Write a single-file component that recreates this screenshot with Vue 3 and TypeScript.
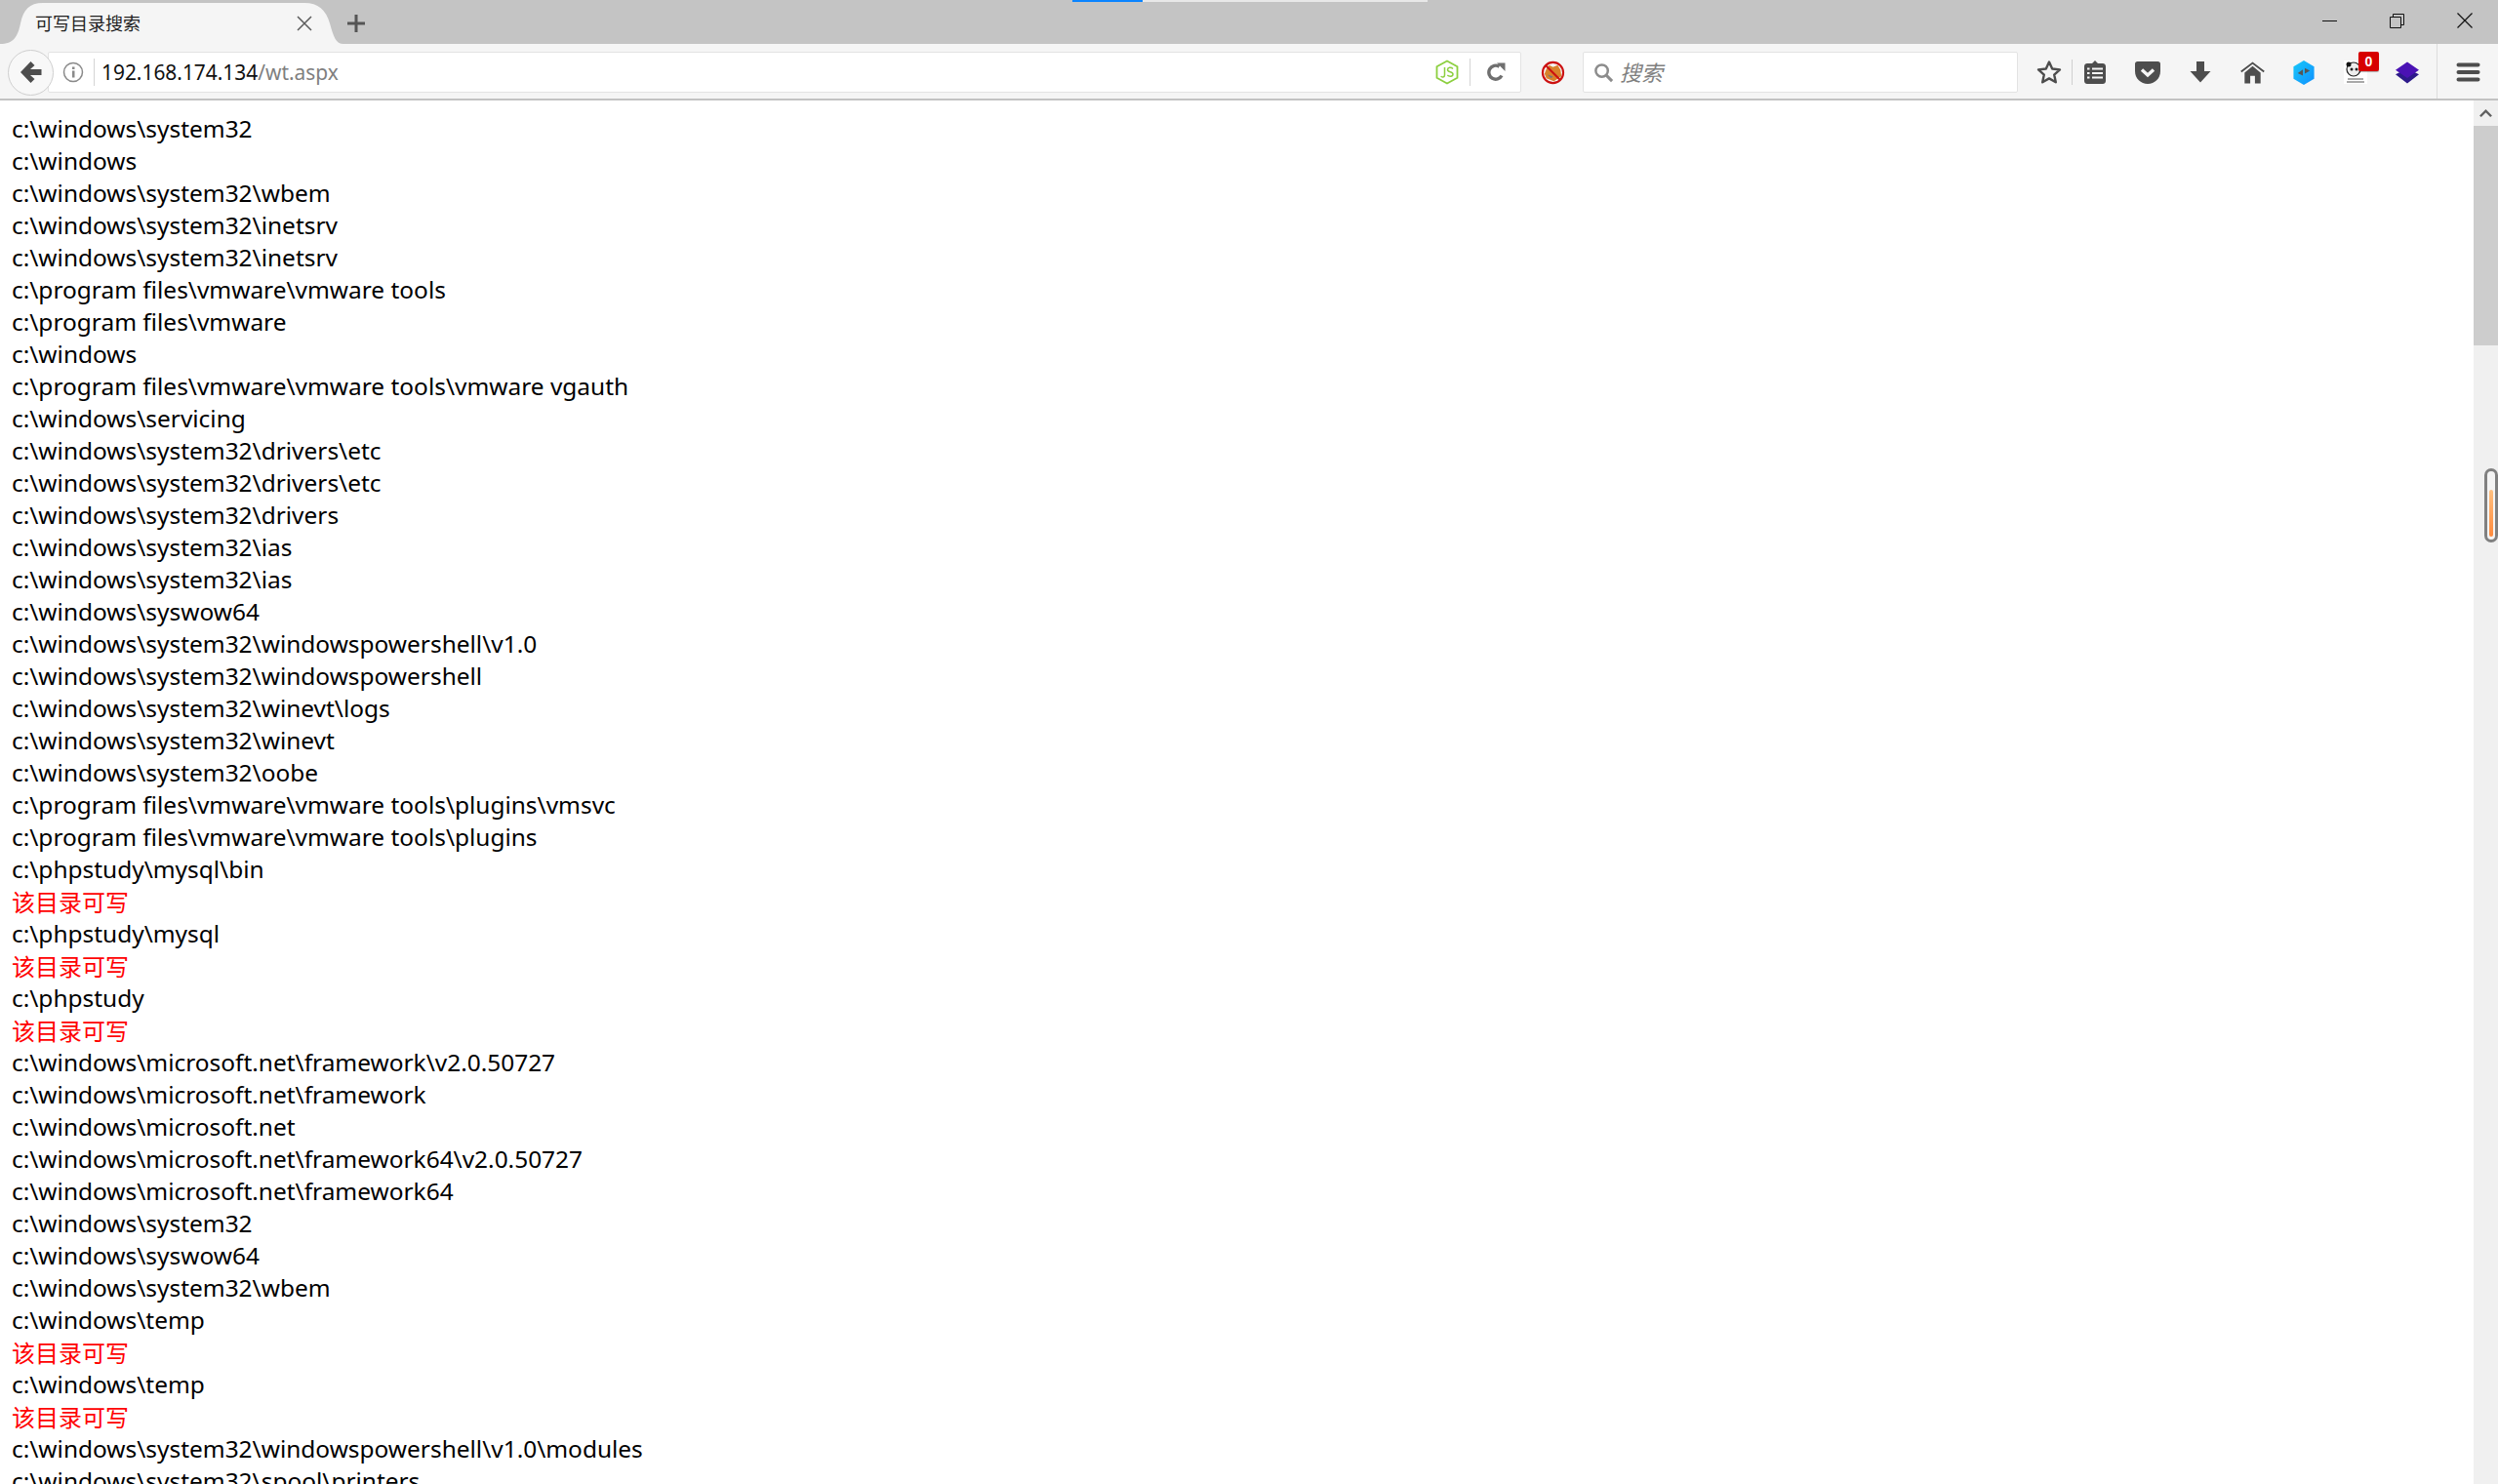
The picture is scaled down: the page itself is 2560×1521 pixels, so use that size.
<script setup lang="ts">
const W = '该目录可写'
const lines: string[] = [
  'c:\\windows\\system32','c:\\windows','c:\\windows\\system32\\wbem','c:\\windows\\system32\\inetsrv','c:\\windows\\system32\\inetsrv',
  'c:\\program files\\vmware\\vmware tools','c:\\program files\\vmware','c:\\windows','c:\\program files\\vmware\\vmware tools\\vmware vgauth',
  'c:\\windows\\servicing','c:\\windows\\system32\\drivers\\etc','c:\\windows\\system32\\drivers\\etc','c:\\windows\\system32\\drivers',
  'c:\\windows\\system32\\ias','c:\\windows\\system32\\ias','c:\\windows\\syswow64','c:\\windows\\system32\\windowspowershell\\v1.0',
  'c:\\windows\\system32\\windowspowershell','c:\\windows\\system32\\winevt\\logs','c:\\windows\\system32\\winevt','c:\\windows\\system32\\oobe',
  'c:\\program files\\vmware\\vmware tools\\plugins\\vmsvc','c:\\program files\\vmware\\vmware tools\\plugins','c:\\phpstudy\\mysql\\bin',W,
  'c:\\phpstudy\\mysql',W,'c:\\phpstudy',W,'c:\\windows\\microsoft.net\\framework\\v2.0.50727','c:\\windows\\microsoft.net\\framework',
  'c:\\windows\\microsoft.net','c:\\windows\\microsoft.net\\framework64\\v2.0.50727','c:\\windows\\microsoft.net\\framework64',
  'c:\\windows\\system32','c:\\windows\\syswow64','c:\\windows\\system32\\wbem','c:\\windows\\temp',W,'c:\\windows\\temp',W,
  'c:\\windows\\system32\\windowspowershell\\v1.0\\modules','c:\\windows\\system32\\spool\\printers'
]
</script>

<template>
  <div class="browser">
    <header class="tabstrip">
      <div class="tab">
        <svg class="tab-shape" width="352" height="45" viewBox="0 0 352 45"><path d="M0 45C14 45 18 38 21 24C24 10 30 3 44 3H312C326 3 334 10 338 24C342 38 344 45 352 45Z" fill="#f5f5f5"/></svg>
        <span class="tab-title">可写目录搜索</span>
        <svg class="tab-close" width="16" height="16" viewBox="0 0 16 16"><path d="M1 1L15 15M15 1L1 15" stroke="#5c5c5c" stroke-width="1.5" fill="none"/></svg>
      </div>
      <svg class="newtab" width="18" height="18" viewBox="0 0 18 18"><path d="M9 0V18M0 9H18" stroke="#555" stroke-width="3" fill="none"/></svg>
      <div class="progress"><i class="p-blue"></i><i class="p-light"></i></div>
      <div class="winctl">
        <svg width="16" height="16" viewBox="0 0 16 16"><path d="M0 8.500H15" stroke="#111" fill="none"/></svg>
        <svg width="16" height="16" viewBox="0 0 16 16"><path d="M.5 4.500H11.500V15.500H.5ZM3.500 4.500V1.500H14.500V12.500H11.500" stroke="#111" fill="none"/></svg>
        <svg width="16" height="16" viewBox="0 0 16 16"><path d="M.5.5L15.500 15.500M15.500.5L.5 15.500" stroke="#111" stroke-width="1.200" fill="none"/></svg>
      </div>
    </header>

    <nav class="toolbar">
      <div class="back">
        <svg width="24" height="24" viewBox="0 0 24 24"><path d="M1 12L11.500 1L15.500 5L11 9H22.500V15H11L15.500 19L11.500 23Z" fill="#4d4d4d"/></svg>
      </div>
      <div class="urlbar">
        <svg class="info" width="22" height="22" viewBox="0 0 22 22"><circle cx="11" cy="11" r="9.500" fill="none" stroke="#8a8a8a" stroke-width="1.500"/><rect x="10" y="9.500" width="2.500" height="7" fill="#8a8a8a"/><rect x="10" y="5.500" width="2.500" height="2.500" fill="#8a8a8a"/></svg>
        <span class="sep"></span>
        <span class="url">192.168.174.134<span class="path">/wt.aspx</span></span>
        <svg class="node" width="24" height="26" viewBox="0 0 24 26"><path d="M12 1.500L22.500 7.200V18.800L12 24.500L1.500 18.800V7.200Z" fill="none" stroke="#8ccf3f" stroke-width="1.800"/><path d="M9.500 8V16C9.500 18.500 6.500 18.500 5.800 17M18 9.500C16 7.500 12.500 8 12.500 10.500C12.500 13.500 18 12 18 15C18 17.800 14 17.800 12.300 16" fill="none" stroke="#8ccf3f" stroke-width="1.500"/></svg>
        <span class="sep sep2"></span>
        <svg class="reload" width="20" height="20" viewBox="0 0 20 20"><path d="M16 13.500A7 7 0 1 1 13.500 4.200" fill="none" stroke="#6f6f6f" stroke-width="3.400"/><path d="M11 .5H19.500V9Z" fill="#6f6f6f"/></svg>
      </div>
      <svg class="block" width="25" height="25" viewBox="0 0 26 26"><path d="M6 9L9 5L13 7L18 5L21 10L22 17L14 22L6 19L4 14Z" fill="#d9822b"/><path d="M7 15L13 17L11 19Z" fill="#777"/><circle cx="13" cy="13" r="11" fill="none" stroke="#cc1111" stroke-width="2.200"/><path d="M5.500 5.500L20.500 20.500" stroke="#cc1111" stroke-width="2.200"/></svg>
      <div class="search">
        <svg width="21" height="21" viewBox="0 0 22 22"><circle cx="9" cy="9" r="6.500" fill="none" stroke="#8c8c8c" stroke-width="2.600"/><path d="M13.500 13.500L20 20" stroke="#8c8c8c" stroke-width="3.200"/></svg>
        <span class="search-text">搜索</span>
      </div>
      <div class="tools">
        <svg class="t-star" width="26" height="26" viewBox="0 0 26 26"><path d="M13 2.500L16.200 9.500L24 10.400L18.200 15.600L19.800 23.300L13 19.400L6.200 23.300L7.800 15.600L2 10.400L9.800 9.500Z" fill="none" stroke="#4d4d4d" stroke-width="2.400" stroke-linejoin="round"/></svg>
        <span class="t-sep"></span>
        <svg class="t-list" width="22" height="24" viewBox="0 0 22 24"><path d="M3 3H8L11 0L14 3H19C20.500 3 22 4 22 6V21C22 23 20.500 24 19 24H3C1.500 24 0 23 0 21V6C0 4 1.500 3 3 3Z" fill="#4d4d4d"/><path d="M3 8.500H5.500M8 8.500H19M3 13H5.500M8 13H19M3 17.500H5.500M8 17.500H19" stroke="#f5f5f5" stroke-width="2"/></svg>
        <svg class="t-pocket" width="26" height="23" viewBox="0 0 26 23"><path d="M2.500 0H23.500C25 0 26 1 26 2.500V10C26 17.500 20 23 13 23C6 23 0 17.500 0 10V2.500C0 1 1 0 2.500 0Z" fill="#4d4d4d"/><path d="M7 8.500L13 14L19 8.500" fill="none" stroke="#f5f5f5" stroke-width="3.400"/></svg>
        <svg class="t-dl" width="22" height="22" viewBox="0 0 22 22"><path d="M7 0H15V10H21.500L11 21.500L.5 10H7Z" fill="#4d4d4d"/></svg>
        <svg class="t-home" width="25" height="23" viewBox="0 0 26 23"><path d="M4.500 11.500L13 4.500L21.500 11.500V23H15.500V15H10.500V23H4.500Z" fill="#4d4d4d"/><path d="M.8 10.500L13 1.200L25.200 10.500" fill="none" stroke="#4d4d4d" stroke-width="2"/></svg>
        <svg class="t-hex" width="22" height="25" viewBox="0 0 22 26"><defs><linearGradient id="hexg" x1="0" y1="0" x2="1" y2="1"><stop offset="0" stop-color="#18c8f8"/><stop offset="1" stop-color="#1090ff"/></linearGradient></defs><path d="M11 0L22 6.500V19.500L11 26L0 19.500V6.500Z" fill="url(#hexg)"/><path d="M10 9.500V16L4.500 13.500ZM12 8V14L17.500 11Z" fill="#555"/></svg>
        <div class="t-panda">
          <svg width="24" height="24" viewBox="0 0 24 24"><rect width="24" height="24" fill="#fff"/><circle cx="10" cy="9" r="7" fill="#eee" stroke="#222" stroke-width="1.200"/><circle cx="5" cy="4" r="2.500" fill="#111"/><circle cx="8" cy="9" r="1.500" fill="#222"/><circle cx="13" cy="9" r="1.500" fill="#222"/><path d="M4 19H20M3 22H21" stroke="#555" stroke-width="1.200"/></svg>
          <b class="badge">0</b>
        </div>
        <svg class="t-layers" width="24" height="23" viewBox="0 0 26 24"><path d="M0 14L6 11L13 15L20 11L26 14L13 24Z" fill="#2d1a8a"/><path d="M13 0L26 9L13 18L0 9Z" fill="#4a12b4"/></svg>
        <span class="t-sep t-sep2"></span>
        <svg class="t-menu" width="25" height="20" viewBox="0 0 24 20"><path d="M2 2.500H22M2 10H22M2 17.500H22" stroke="#4d4d4d" stroke-width="4" stroke-linecap="round" fill="none"/></svg>
      </div>
    </nav>

    <main class="page">
      <section class="content">
        <div v-for="(line, i) in lines" :key="i" :class="{ writable: line === W }">{{ line }}</div>
      </section>
      <aside class="scrollbar">
        <div class="sb-up"><svg width="13" height="10" viewBox="0 0 14 10"><path d="M1 8.500L7 2.500L13 8.500" fill="none" stroke="#606060" stroke-width="2.600"/></svg></div>
        <div class="sb-thumb"></div>
        <div class="marker"><i></i></div>
      </aside>
    </main>
  </div>
</template>

<style>
html, body { margin: 0; height: 100%; overflow: hidden; background: #fff; }
</style>

<style scoped>
.browser { width: 2560px; height: 1521px; display: flex; flex-direction: column; overflow: hidden; font-family: "Noto Sans", "Noto Sans CJK SC", sans-serif; }
.tabstrip { height: 45px; flex: none; background: #c4c4c4; position: relative; display: flex; align-items: center; }
.tab { width: 352px; height: 45px; position: relative; display: flex; align-items: center; flex: none; }
.tab-shape { position: absolute; left: 0; top: 0; }
.tab-title { position: relative; margin-left: 36px; font: 18px "Noto Sans CJK SC", sans-serif; color: #222; }
.tab-close { position: absolute; left: 304px; top: 16px; }
.newtab { margin: 3px 0 0 4px; }
.progress { position: absolute; left: 1099px; top: 0; height: 2px; display: flex; }
.p-blue { width: 72px; background: #0a84ff; }
.p-light { width: 292px; background: #e8e8e8; }
.winctl { margin-left: auto; display: flex; gap: 53px; padding-right: 26px; align-items: center; margin-top: -3px; }
.toolbar { height: 58px; flex: none; box-sizing: border-box; background: #f5f5f5; border-bottom: 2px solid #c2c2c2; display: flex; align-items: center; position: relative; padding: 2px 0 0 8px; }
.back { width: 47px; height: 47px; box-sizing: border-box; border-radius: 50%; border: 1px solid #cfcfcf; background: #f8f8f8; display: flex; align-items: center; justify-content: center; position: relative; z-index: 1; flex: none; }
.urlbar { width: 1510px; height: 42px; margin-left: -6px; box-sizing: border-box; background: #fff; border: 1px solid #e3e3e3; border-radius: 2px; display: flex; align-items: center; flex: none; }
.info { margin-left: 14px; flex: none; }
.sep { width: 1px; height: 28px; background: #d4d4d4; margin-left: 10px; flex: none; }
.url { margin-left: 7px; font: 20.900px "Noto Sans", sans-serif; color: #111; }
.path { color: #7f7f7f; }
.node { margin-left: auto; }
.sep2 { margin-left: 11px; }
.reload { margin: 0 15px 0 16px; }
.block { margin-left: 20px; flex: none; }
.search { width: 446px; height: 42px; margin-left: 18px; box-sizing: border-box; background: #fff; border: 1px solid #e3e3e3; border-radius: 2px; display: flex; align-items: center; padding-left: 10px; gap: 6px; color: #808080; font: italic 22px/26px "Noto Sans CJK SC", sans-serif; flex: none; }
.search-text { margin-top: -2px; }
.tools { display: flex; align-items: center; margin-left: 19px; flex: 1; height: 100%; }
.t-sep { width: 1px; height: 26px; background: #cfcfcf; margin-left: 10px; }
.t-list { margin-left: 12px; }
.t-pocket { margin-left: 30px; }
.t-dl { margin-left: 30px; }
.t-home { margin-left: 30px; }
.t-hex { margin-left: 29px; }
.t-panda { margin-left: 30px; width: 24px; height: 24px; position: relative; }
.t-panda svg { display: block; }
.badge { position: absolute; left: 15px; top: -9px; width: 21px; height: 20px; background: #d70000; color: #fff; border-radius: 2px; font: bold 14px/20px "Liberation Sans", sans-serif; text-align: center; box-shadow: 0 1px 1px rgba(0,0,0,.3); }
.t-layers { margin-left: 29px; }
.t-sep2 { align-self: flex-start; height: 56px; margin: -2px 0 0 18px; background: #dcdcdc; }
.t-menu { margin-left: 19px; }
.page { flex: 1; min-height: 0; display: flex; background: #fff; }
.content { flex: 1; padding: 12px 0 0 12px; font-size: 24.450px; line-height: 33px; color: #000; white-space: nowrap; overflow: hidden; }
.writable { color: #f00; font-family: "Noto Sans CJK SC", sans-serif; font-size: 24px; }
.scrollbar { width: 25px; flex: none; background: #f0f0f0; position: relative; }
.sb-up { height: 26px; display: flex; align-items: center; justify-content: center; }
.sb-thumb { height: 225px; background: #cdcdcd; }
.marker { position: absolute; left: 11px; top: 377px; width: 14px; height: 76px; box-sizing: border-box; border: 3px solid #808080; border-radius: 7px; background: #f4f4f4; padding: 19px 2px 3px; }
.marker i { display: block; height: 100%; border-radius: 3px; background: linear-gradient(#ffc080, #ff8a3c); }
</style>
